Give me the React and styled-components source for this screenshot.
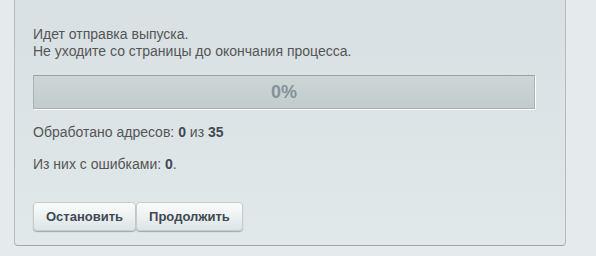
import styled, { createGlobalStyle } from "styled-components";

const GlobalStyle = createGlobalStyle`
  html, body {
    margin: 0;
    padding: 0;
    background: #e5ebec;
    font-family: "Liberation Sans", Arial, sans-serif;
  }
`;

const Page = styled.div`
  padding: 0 30px 10px 14px;
`;

const Panel = styled.div`
  width: 552px;
  box-sizing: border-box;
  background: linear-gradient(to bottom, #d8e0e3, #e1e8ea);
  border: 1px solid #b3bcbe;
  border-top: none;
  border-bottom-color: #9ea8aa;
  border-radius: 0 0 4px 4px;
  padding: 26px 18px 14px;
  color: #555;
  font-size: 14px;
`;

const Message = styled.div`
  line-height: 17px;
`;

const ProgressBar = styled.div`
  width: 502px;
  height: 34px;
  box-sizing: border-box;
  margin-top: 15px;
  border: 1px solid #aab3b4;
  border-top-color: #9aa4a5;
  background: linear-gradient(to bottom, #cdd6d7, #c2cccc);
  box-shadow: 1px 1px 0 #fff;
  display: flex;
  align-items: center;
  justify-content: center;
  font-size: 18px;
  font-weight: bold;
  color: #85919a;
`;

const Stat = styled.div`
  margin-top: 15px;
  line-height: 17px;

  b {
    color: #3f4a52;
  }
`;

const Buttons = styled.div`
  display: flex;
  margin-top: 29px;
`;

const Button = styled.button`
  height: 29px;
  padding: 0 12px;
  border: 1px solid #c5cdcf;
  border-radius: 4px;
  background: linear-gradient(to bottom, #fbfcfc, #dde5e7);
  box-shadow: 0 1px 1px rgba(0, 0, 0, 0.28);
  font-family: "Liberation Sans", Arial, sans-serif;
  font-size: 13px;
  font-weight: bold;
  color: #3f4a52;
  cursor: pointer;
`;

export default function App() {
  return (
    <Page>
      <GlobalStyle />
      <Panel>
        <Message>
          Идет отправка выпуска.
          <br />
          Не уходите со страницы до окончания процесса.
        </Message>
        <ProgressBar>0%</ProgressBar>
        <Stat>
          Обработано адресов: <b>0</b> из <b>35</b>
        </Stat>
        <Stat>
          Из них с ошибками: <b>0</b>.
        </Stat>
        <Buttons>
          <Button>Остановить</Button>
          <Button>Продолжить</Button>
        </Buttons>
      </Panel>
    </Page>
  );
}
